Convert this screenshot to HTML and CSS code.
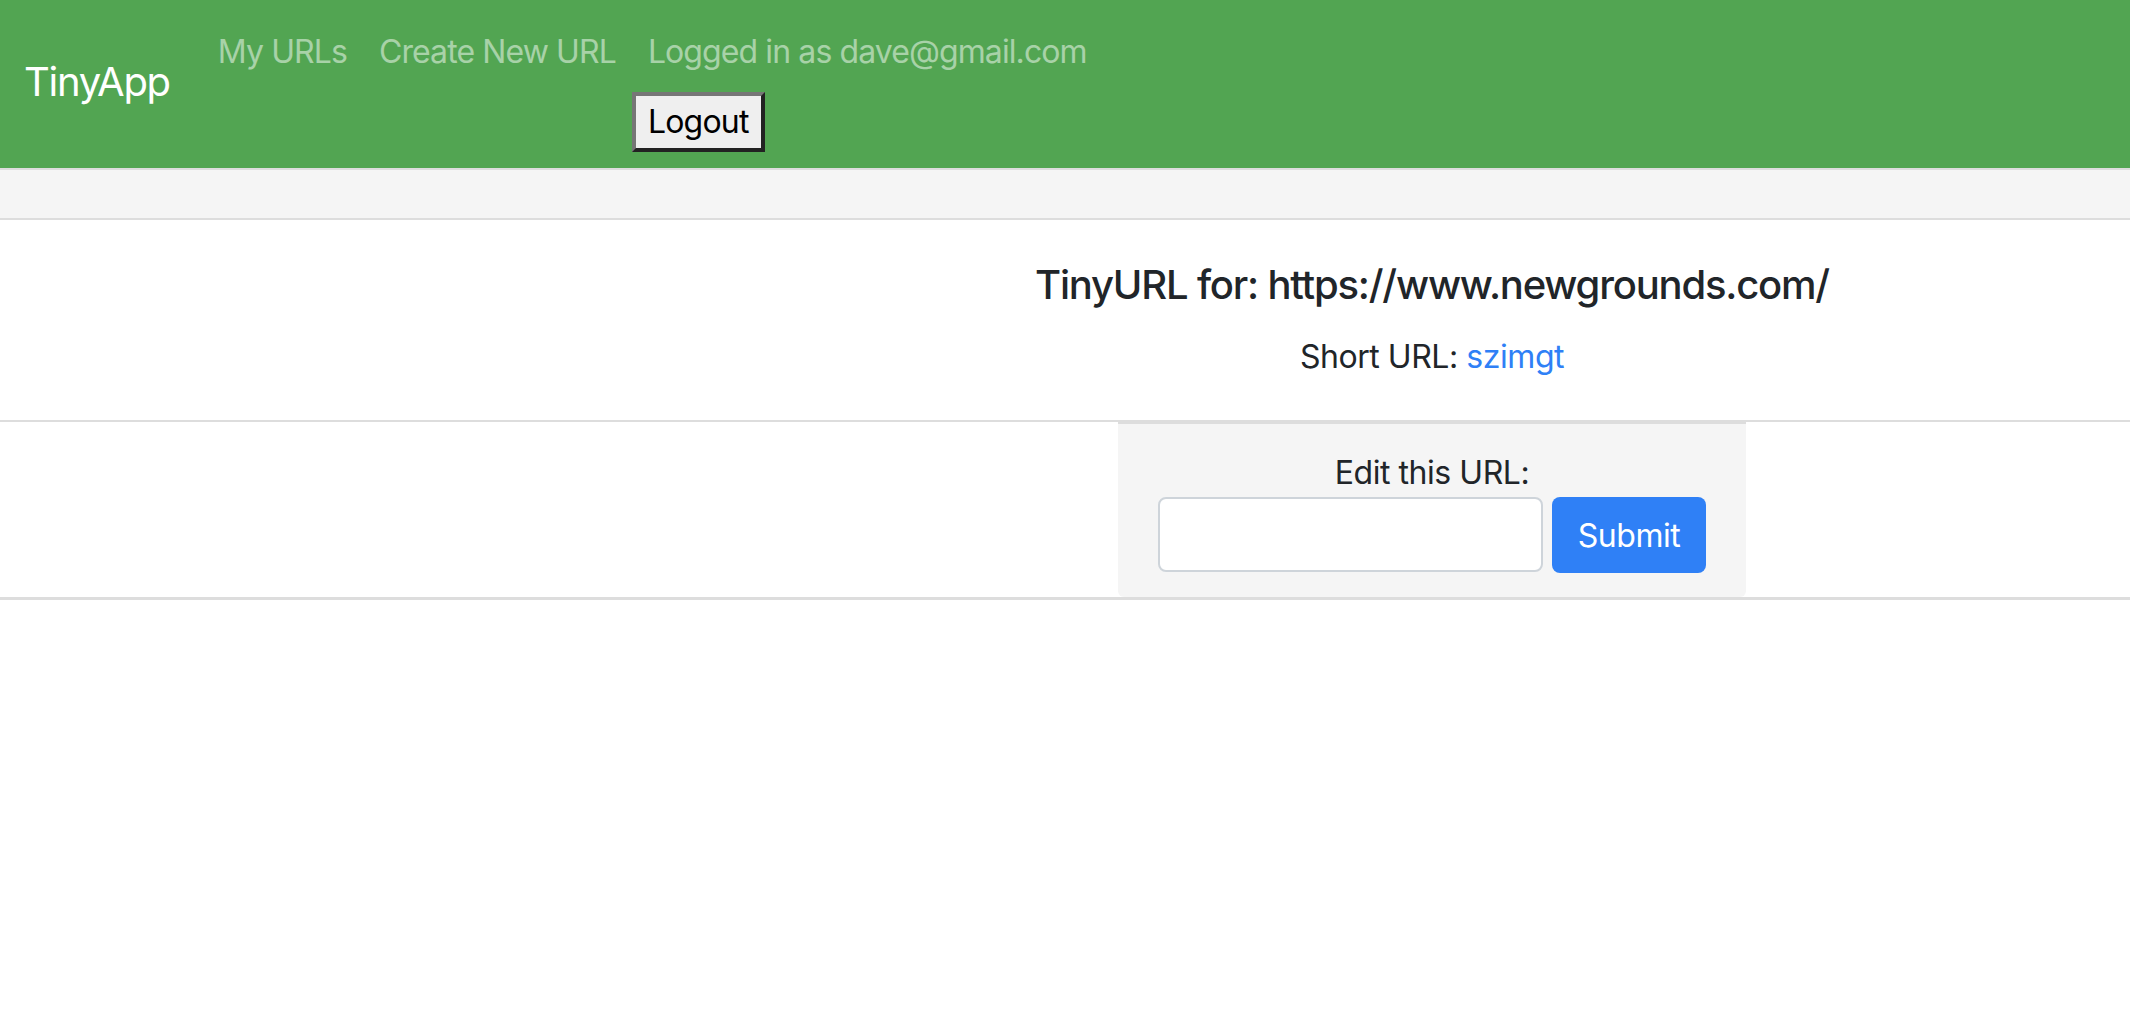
FILE: index.html
```html
<!DOCTYPE html>
<html lang="en">
<head>
<meta charset="utf-8">
<title>TinyApp</title>
<link rel="stylesheet" href="styles.css">
</head>
<body>
<header class="navbar">
  <a class="brand" href="#">TinyApp</a>
  <ul class="nav">
    <li><a class="nav-link" href="#">My URLs</a></li>
    <li><a class="nav-link" href="#">Create New URL</a></li>
    <li>
      <a class="nav-link" href="#">Logged in as dave@gmail.com</a>
      <form class="logout-form"><button type="button" class="logout">Logout</button></form>
    </li>
  </ul>
</header>
<div class="subbar"></div>
<section class="info">
  <h5 class="title">TinyURL for: https://www.newgrounds.com/</h5>
  <p class="short">Short URL: <a href="#">szimgt</a></p>
</section>
<section class="edit">
  <div class="card">
    <label class="edit-label">Edit this URL:</label>
    <form class="edit-row">
      <input class="url-input" type="text">
      <button type="button" class="submit">Submit</button>
    </form>
  </div>
</section>
</body>
</html>
```
FILE: styles.css
```css
html, body {
  margin: 0;
  padding: 0;
  background: #fff;
}
body {
  font-family: Inter, "Noto Sans", "Liberation Sans", sans-serif;
  color: #212529;
  font-size: 32px;
  line-height: 48px;
  letter-spacing: -0.45px;
}
.navbar {
  display: flex;
  align-items: center;
  background: #52a552;
  padding: 12px 24px 16px 24px;
}
.brand {
  color: #fff;
  font-size: 40px;
  line-height: 60px;
  letter-spacing: -1.3px;
  text-decoration: none;
  margin-right: 32px;
}
.nav {
  display: flex;
  align-items: flex-start;
  list-style: none;
  margin: 0;
  padding: 0;
}
.nav-link {
  display: block;
  padding: 16px;
  color: rgba(255, 255, 255, 0.5);
  text-decoration: none;
  font-size: 32px;
  line-height: 48px;
  letter-spacing: -0.9px;
}
.logout-form {
  margin: 0;
}
.logout {
  font-family: inherit;
  font-size: 32px;
  line-height: 44px;
  letter-spacing: -0.8px;
  color: #000;
  background: #efefef;
  border: 4px solid;
  border-color: #767676 #222 #222 #767676;
  padding: 4px 12px;
  margin: 0;
}
.subbar {
  height: 48px;
  background: #f5f5f5;
  border-top: 2px solid #ddd;
  border-bottom: 2px solid #ddd;
}
.info {
  padding: 41px 0 39px 734px;
  text-align: center;
  border-bottom: 2px solid #ddd;
}
.title {
  margin: 0 0 24px 0;
  font-size: 40px;
  line-height: 48px;
  font-weight: 500;
  letter-spacing: -1.2px;
}
.short {
  margin: 0;
}
.short a {
  color: #2f80f6;
  text-decoration: none;
}
.edit {
  padding-left: 734px;
  border-bottom: 3px solid #ddd;
}
.card {
  width: 628px;
  box-sizing: border-box;
  margin: 0 auto;
  background: #f5f5f5;
  border-top: 2px solid #ddd;
  border-radius: 0 0 6px 6px;
  padding: 25px 40px 24px;
  text-align: center;
}
.edit-label {
  display: block;
}
.edit-row {
  display: flex;
  gap: 9px;
  margin: 0;
}
.url-input {
  width: 385px;
  height: 75px;
  box-sizing: border-box;
  border: 2px solid #ced4da;
  border-radius: 8px;
  background: #fff;
  margin: 0;
}
.submit {
  width: 154px;
  height: 76px;
  border: none;
  border-radius: 8px;
  background: #2f80f6;
  color: #fff;
  font-family: inherit;
  font-size: 32px;
  letter-spacing: -0.45px;
  padding: 0;
  margin: 0;
}
```
